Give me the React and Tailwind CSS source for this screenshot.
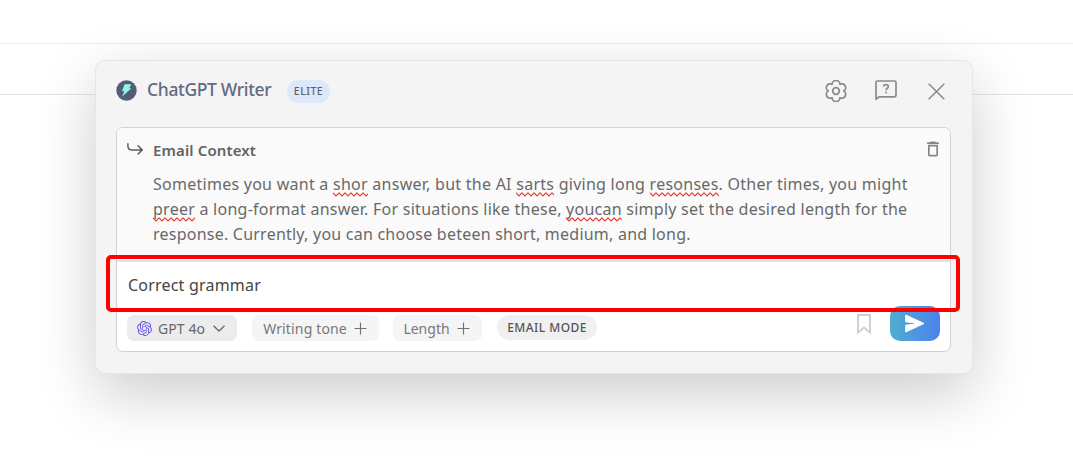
import React from "react";
import { MdDeleteOutline } from "react-icons/md";
import { SiOpenai } from "react-icons/si";

// word with the spell checker's red line over its lower edge
const Misspelled = ({ id, children }) => (
    <span className="relative inline-block">
        {children}
        <svg className="absolute left-0 top-[20px] h-[5px] w-full" fill="none">
            <defs>
                <pattern id={id} width="6" height="5" patternUnits="userSpaceOnUse">
                    <path d="M-1 0L0 1L3 4L6 1L7 0" stroke="#e93e36" strokeWidth="1.2" />
                </pattern>
            </defs>
            <rect width="100%" height="5" fill={`url(#${id})`} />
        </svg>
    </span>
);

const Plus = () => (
    <svg className="ml-[7px]" width="13" height="13" viewBox="0 0 13 13" fill="none" stroke="#737373" strokeWidth="1.2">
        <path d="M0.5 6.5h12M6.5 0.5v12" />
    </svg>
);

const Header = () => (
    <div className="flex h-[66px] items-start pl-[20px] pr-[27px] text-[#8a8a8a]">
        <svg className="mt-[19px]" width="21" height="21" viewBox="0 0 21 21">
            <circle cx="10.5" cy="10.5" r="10.2" fill="#525e75" />
            <path d="M8.6 4.2h6.7l-2 4h2.1L6 16.8l2.4-5.6H6z" fill="#92f5ec" />
        </svg>
        <h1 className="ml-[10px] mt-[14px] w-[140px] whitespace-nowrap text-[17.5px] font-medium leading-[28px] tracking-[-0.35px] text-[#616b82]">ChatGPT Writer</h1>
        <span className="mt-[19px] flex h-[23px] w-[43px] items-center justify-center rounded-full bg-[#dde8fb] text-[10.5px] font-medium tracking-[0.5px] text-[#5c626c]">ELITE</span>
        <div className="ml-auto flex">
            <svg className="mt-[19px]" width="22" height="22" viewBox="0 0 22 22" fill="none" stroke="currentColor" strokeWidth="1.7" strokeLinejoin="round">
                <path d="M18.8 11A3.9 3.9 0 0 1 14.9 17.75A3.9 3.9 0 0 1 7.1 17.75A3.9 3.9 0 0 1 3.2 11A3.9 3.9 0 0 1 7.1 4.25A3.9 3.9 0 0 1 14.9 4.25A3.9 3.9 0 0 1 18.8 11z" />
                <circle cx="11" cy="11" r="3.3" />
            </svg>
            <svg className="ml-[28px] mt-[19px]" width="22" height="21" viewBox="0 0 22 21" fill="none" stroke="currentColor" strokeWidth="1.7">
                <path d="M1 19.3V2.5Q1 1 2.5 1h17Q21 1 21 2.5v12.8Q21 16.8 19.5 16.8H4z" strokeLinejoin="round" />
                <path d="M8.6 6.5Q8.8 4.7 11 4.7t2.4 1.9c0 1.7-2.3 1.7-2.3 3.7M11.1 11.6v1.7" />
            </svg>
            <svg className="ml-[31px] mt-[22px]" width="17" height="17" viewBox="0 0 17 17" fill="none" stroke="currentColor" strokeWidth="1.5">
                <path d="M0.7 0.7l15.6 15.6M16.3 0.7L0.7 16.3" />
            </svg>
        </div>
    </div>
);

const EmailContext = () => (
    <div className="flex h-[134px] items-start rounded-t-[6px] border-b-2 border-[#e2e2e2] bg-[#fafafa] pl-[10px] pr-[10px]">
        <svg className="mt-[15px] shrink-0" width="16" height="13" viewBox="0 0 16 13" fill="none" stroke="#5c5c5c" strokeWidth="1.5" strokeLinecap="round" strokeLinejoin="round">
            <path d="M0.9 0.8v2Q0.9 6.9 5 6.9h10M11.1 2.8l4.1 4.1-4.1 4.1" />
        </svg>
        <div className="ml-[10px] flex-1">
            <h2 className="mt-[9px] text-[15px] font-semibold leading-[26px] tracking-[0.13px] text-[#636363]">Email Context</h2>
            <div className="mt-[9px] whitespace-nowrap text-[16px] leading-[25px] tracking-[0.25px] text-[#696969]">
                <p className="tracking-[0.26px]">Sometimes you want a <Misspelled id="shor">shor</Misspelled> answer, but the AI <Misspelled id="sarts">sarts</Misspelled> giving long <Misspelled id="resonses">resonses</Misspelled>. Other times, you might</p>
                <p><Misspelled id="preer">preer</Misspelled> a long-format answer. For situations like these, <Misspelled id="youcan">youcan</Misspelled> simply set the desired length for the</p>
                <p className="tracking-[0.23px]">response. Currently, you can choose beteen short, medium, and long.</p>
            </div>
        </div>
        <MdDeleteOutline className="-mr-[3px] mt-[11px] shrink-0 text-[#858585]" size={20} />
    </div>
);

const Toolbar = () => (
    <div className="flex h-[46px] items-start pl-[10px] pr-[10px] text-[14px] text-[#696969]">
        <button className="mt-[9px] flex h-[26px] w-[110px] items-center whitespace-nowrap rounded-[7px] bg-[#ececec] pl-[10px]">
            <SiOpenai size={15} color="#6656e8" />
            <span className="ml-[5px] w-[49px] tracking-[0.1px]">GPT 4o</span>
            <svg className="ml-[7px]" width="12" height="7" viewBox="0 0 12 7" fill="none" stroke="currentColor" strokeWidth="1.3">
                <path d="M0.5 0.7L6 6l5.5-5.3" />
            </svg>
        </button>
        <button className="ml-[15px] mt-[9px] flex h-[26px] w-[127px] items-center whitespace-nowrap rounded-[7px] bg-[#f5f5f5] pl-[11px] text-[#777]">
            <span className="w-[84px] tracking-[0.15px]">Writing tone</span>
            <Plus />
        </button>
        <button className="ml-[14px] mt-[9px] flex h-[26px] w-[89px] items-center whitespace-nowrap rounded-[7px] bg-[#f5f5f5] pl-[10px] text-[#777]">
            <span className="w-[47px]">Length</span>
            <Plus />
        </button>
        <span className="ml-[15px] mt-[9px] flex h-[25px] w-[100px] items-center justify-center whitespace-nowrap rounded-full bg-[#f0f0f0] text-[12px] font-medium tracking-[0.45px] text-[#555]">EMAIL MODE</span>
        <svg className="ml-auto mt-[8px]" width="14" height="20" viewBox="0 0 14 20" fill="none" stroke="#cdcdcd" strokeWidth="1.8">
            <path d="M1 1h12v17.5l-6-5-6 5z" />
        </svg>
        <button className="ml-[19px] flex h-[35px] w-[50px] items-center justify-center rounded-[10px] bg-linear-to-r from-[#50adcf] to-[#4e80ee]">
            <svg width="20" height="19" viewBox="0 0 20 19" fill="#fff" stroke="#fff" strokeLinejoin="round">
                <path d="M0.7 1L19 9.5 0.7 18V11.2L9.5 10.2V8.8L0.7 7.8z" />
            </svg>
        </button>
    </div>
);

const App = () => {
    return (
        <div className="relative h-[459px] w-[1073px] overflow-hidden bg-white font-['Noto_Sans','Open_Sans',sans-serif]">
            {/* lines of the page behind the dialog */}
            <div className="h-[44px] border-b border-[#efefef]"></div>
            <div className="h-[51px] border-b border-[#e5e5e5]"></div>

            <div className="absolute left-[95px] top-[60px] h-[314px] w-[878px] rounded-[10px] border border-[#e5e6e8] bg-[#f4f4f4] shadow-[0_20px_60px_rgba(0,0,0,0.2)]">
                <Header />
                <div className="ml-[20px] h-[225px] w-[835px] rounded-[7px] border border-[#d2d2d2] bg-white">
                    <EmailContext />
                    <p className="h-[44px] pl-[11px] pt-[10px] text-[16px] leading-[26px] tracking-[0.2px] text-[#454545]">Correct grammar</p>
                    <Toolbar />
                </div>
            </div>

            {/* highlight over the prompt */}
            <div className="absolute left-[106px] top-[255px] h-[57px] w-[854px] rounded-[5px] border-4 border-[#fe0000]"></div>
        </div>
    );
};

export default App;
